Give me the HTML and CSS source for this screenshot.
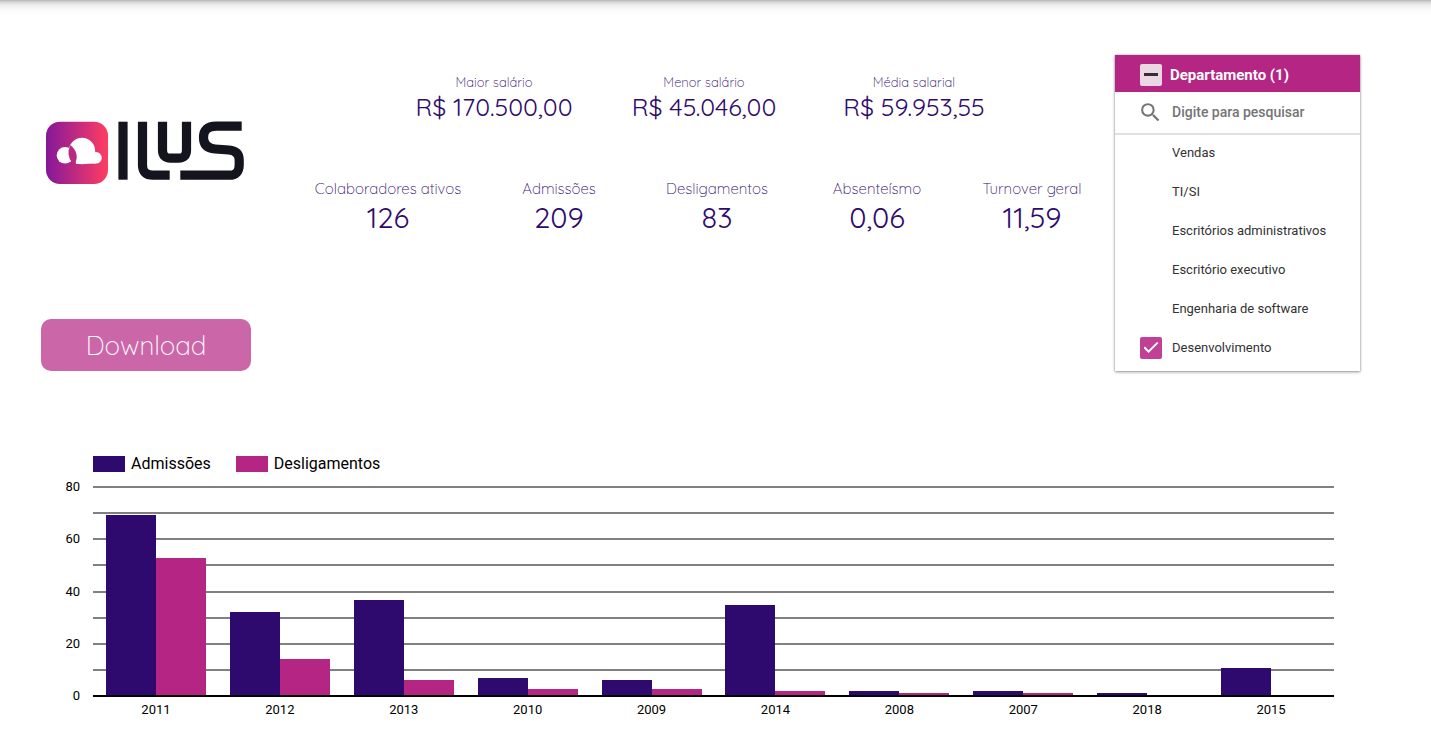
FILE: index.html
```html
<!DOCTYPE html>
<html lang="pt-BR">
<head>
<meta charset="utf-8">
<meta name="viewport" content="width=device-width, initial-scale=1">
<title>ILUS - Colaboradores</title>
<link rel="stylesheet" href="styles.css">
</head>
<body>
<main class="page">
  <section class="overview">
    <div class="brand">
      <svg class="logo" viewBox="0 0 198 64" role="img" aria-label="ILUS">
        <defs>
          <linearGradient id="tile" x1="0" x2="1" y1="0" y2="0">
            <stop offset="0" stop-color="#84189a"/>
            <stop offset="1" stop-color="#ff3d62"/>
          </linearGradient>
        </defs>
        <rect x="0" y="0.7" width="62" height="62.3" rx="14" fill="url(#tile)"/>
        <g fill="#fff">
          <circle cx="19" cy="34.3" r="8.3"/>
          <circle cx="36" cy="30" r="13.2"/>
          <circle cx="50" cy="36.8" r="5.8"/>
          <path d="M30 36H46L50 42.4Q42 42.6 37 43H30Z"/>
        </g>
        <path d="M24.500 24Q34.500 33 28.500 43.500L26.500 42.500Q19.500 33.500 24.500 24Z" fill="#b92a81"/>
        <g fill="none" stroke="#14141f" stroke-width="9.2">
          <path d="M77 0.700V58.700"/>
          <path d="M96.500 0.700V44Q96.500 54.200 107 54.200H123.700"/>
          <path d="M116.500 0.700V29Q116.500 37.200 124.500 37.200H132.500Q140.500 37.200 140.500 29V0.700"/>
          <path d="M195.700 5.200H170Q157.500 5.200 157.500 16.500Q157.500 27 169 28L183 29Q193.200 30 193.200 39V44Q193.200 54.200 183 54.200H134.300"/>
        </g>
      </svg>
      <button class="download" type="button">Download</button>
    </div>

    <div class="stats">
      <dl class="row salaries">
        <div><dt>Maior salário</dt><dd>R$ 170.500,00</dd></div>
        <div><dt>Menor salário</dt><dd>R$ 45.046,00</dd></div>
        <div><dt>Média salarial</dt><dd>R$ 59.953,55</dd></div>
      </dl>
      <dl class="row people">
        <div><dt>Colaboradores ativos</dt><dd>126</dd></div>
        <div><dt>Admissões</dt><dd>209</dd></div>
        <div><dt>Desligamentos</dt><dd>83</dd></div>
        <div><dt>Absenteísmo</dt><dd>0,06</dd></div>
        <div><dt>Turnover geral</dt><dd>11,59</dd></div>
      </dl>
    </div>

    <form class="filter">
      <label class="filter-head">
        <input class="box partial" type="checkbox">
        <span>Departamento (1)</span>
      </label>
      <div class="search">
        <svg viewBox="0 0 24 24" aria-hidden="true"><path fill="#757575" d="M15.500 14h-.79l-.28-.27A6.470 6.470 0 0 0 16 9.500 6.500 6.500 0 1 0 9.500 16c1.610 0 3.090-.59 4.230-1.570l.27.28v.79l5 4.990L20.490 19l-4.990-5zm-6 0C7.010 14 5 11.990 5 9.500S7.010 5 9.500 5 14 7.010 14 9.500 11.990 14 9.500 14z"/></svg>
        <input type="text" placeholder="Digite para pesquisar" aria-label="Digite para pesquisar">
      </div>
      <div class="options">
        <label><input class="box" type="checkbox"><span>Vendas</span></label>
        <label><input class="box" type="checkbox"><span>TI/SI</span></label>
        <label><input class="box" type="checkbox"><span>Escritórios administrativos</span></label>
        <label><input class="box" type="checkbox"><span>Escritório executivo</span></label>
        <label><input class="box" type="checkbox"><span>Engenharia de software</span></label>
        <label><input class="box" type="checkbox" checked><span>Desenvolvimento</span></label>
      </div>
    </form>
  </section>

  <section class="chart">
    <div class="legend">
      <span class="key"><i class="hired"></i>Admissões</span>
      <span class="key"><i class="left"></i>Desligamentos</span>
    </div>
    <div class="scale"><span>80</span><span>60</span><span>40</span><span>20</span><span>0</span></div>
    <div class="plot">
      <div class="lines"><i></i><i></i><i></i><i></i><i></i><i></i><i></i><i></i><i></i></div>
      <div class="bars">
        <div class="group"><i class="hired" style="height:86%"></i><i class="left" style="height:65.600%"></i></div>
        <div class="group"><i class="hired" style="height:40%"></i><i class="left" style="height:17.500%"></i></div>
        <div class="group"><i class="hired" style="height:45.700%"></i><i class="left" style="height:7.500%"></i></div>
        <div class="group"><i class="hired" style="height:8.750%"></i><i class="left" style="height:3.500%"></i></div>
        <div class="group"><i class="hired" style="height:7.500%"></i><i class="left" style="height:3.500%"></i></div>
        <div class="group"><i class="hired" style="height:43.500%"></i><i class="left" style="height:2.500%"></i></div>
        <div class="group"><i class="hired" style="height:2.500%"></i><i class="left" style="height:1.250%"></i></div>
        <div class="group"><i class="hired" style="height:2.500%"></i><i class="left" style="height:1.250%"></i></div>
        <div class="group"><i class="hired" style="height:1.250%"></i><i class="left" style="height:0%"></i></div>
        <div class="group"><i class="hired" style="height:13.400%"></i><i class="left" style="height:0%"></i></div>
      </div>
      <div class="baseline"></div>
    </div>
    <div class="years"><span>2011</span><span>2012</span><span>2013</span><span>2010</span><span>2009</span><span>2014</span><span>2008</span><span>2007</span><span>2018</span><span>2015</span></div>
  </section>
</main>
</body>
</html>
```
FILE: styles.css
```css
* { box-sizing: border-box; }

body {
  margin: 0;
  color: #000;
  font-family: Roboto, "Liberation Sans", sans-serif;
  background: #fff linear-gradient(#b4b4b4 0, #d6d6d6 2px, #ededed 5px, #fafafa 10px, #fff 15px) top / 100% 15px no-repeat;
}

.page { padding: 55px 71px 20px 41px; }

.overview {
  display: grid;
  grid-template-columns: 210px 1fr 245px;
  align-items: start;
}

/* Brand column */
.brand { padding-top: 66px; }
.logo {
  display: block;
  width: 198px;
  height: 64px;
  margin: 0 0 134px 5px;
}
.download {
  display: block;
  width: 100%;
  height: 52px;
  padding: 2px 0 0;
  border: 0;
  border-radius: 10px;
  background: #cb66a8;
  color: #fff;
  font: 300 26px/50px Quicksand, Lato, sans-serif;
}

/* Indicators */
.stats {
  padding: 19px 19px 0 55px;
  font-family: Quicksand, Lato, sans-serif;
  text-align: center;
  white-space: nowrap;
}
.row { display: grid; margin: 0; }
.row dd { margin: 0; color: #2f0a6e; font-weight: 400; }
.row dt { color: #2f0a6e; font-weight: 300; }
.salaries {
  grid-template-columns: repeat(3, 1fr);
  margin: 0 77px 56px 83px;
}
.salaries dt { font-size: 13px; line-height: 17px; }
.salaries dd { font-size: 25px; line-height: 32px; }
.people { grid-template-columns: 164fr 178fr 138fr 182fr 128fr; }
.people dt { font-size: 15px; line-height: 20px; }
.people dd { font-size: 29px; line-height: 36px; }

/* Department filter */
.filter {
  background: #fff;
  box-shadow: 0 1px 3px rgba(0, 0, 0, .4), 0 0 1px rgba(0, 0, 0, .4);
}
.filter-head {
  display: flex;
  align-items: center;
  gap: 8px;
  height: 37px;
  padding: 2px 25px 0;
  background: #b52583;
  color: #fff;
  font-size: 15px;
  font-weight: 700;
}
.search {
  display: flex;
  align-items: center;
  gap: 9px;
  height: 43px;
  padding: 0 0 1px 23px;
  border-bottom: 2px solid #e0e0e0;
}
.search svg { width: 25px; height: 25px; flex: none; }
.search input {
  width: 100%;
  min-width: 0;
  padding: 0;
  border: 0;
  outline: 0;
  background: none;
  font: 500 14px Roboto, sans-serif;
}
.search input::placeholder { color: #757575; opacity: 1; }
.options { padding-bottom: 2px; }
.options label {
  display: flex;
  align-items: center;
  gap: 10px;
  height: 39px;
  padding: 0 25px 4px;
  color: #333;
  font-size: 13px;
  white-space: nowrap;
}
.box {
  flex: none;
  display: grid;
  place-items: center;
  appearance: none;
  width: 22px;
  height: 22px;
  margin: 0;
  border-radius: 2px;
}
.box:checked { background: #c04095; }
.box:checked::before {
  content: "";
  width: 15px;
  height: 11px;
  background: #fff;
  clip-path: polygon(0 54%, 10% 42%, 34% 74%, 90% 0, 100% 10%, 34% 100%);
}
.partial { background: #ead7e4; }
.partial::before {
  content: "";
  width: 14px;
  height: 3px;
  background: #3d2738;
}

/* Yearly chart */
.chart {
  display: grid;
  grid-template-columns: 52px 1fr;
  margin: 85px 26px 0 0;
  font-size: 13px;
}
.hired { background: #2f0a6e; }
.left { background: #b52583; }
.legend {
  grid-column: 2;
  display: flex;
  gap: 25px;
  margin-bottom: 14px;
  font-size: 16px;
  line-height: 16px;
}
.key { display: flex; gap: 6px; }
.key i { width: 32px; height: 16px; }
.scale {
  grid-column: 1;
  display: flex;
  flex-direction: column;
  justify-content: space-between;
  margin: -5px 13px -5px 0;
  line-height: 12px;
  text-align: right;
}
.plot { display: grid; height: 211px; }
.lines, .bars, .baseline { grid-area: 1 / 1; }
.lines {
  display: flex;
  flex-direction: column;
  justify-content: space-between;
}
.lines i { height: 2px; background: #808080; }
.bars, .years {
  display: grid;
  grid-template-columns: repeat(10, 1fr);
  padding: 0 1px 1px;
}
.group { display: flex; align-items: flex-end; justify-content: center; }
.group i { width: 50px; }
.baseline { align-self: end; height: 2px; background: #000; }
.years {
  grid-column: 2;
  padding-top: 5px;
  line-height: 16px;
  text-align: center;
}
```
